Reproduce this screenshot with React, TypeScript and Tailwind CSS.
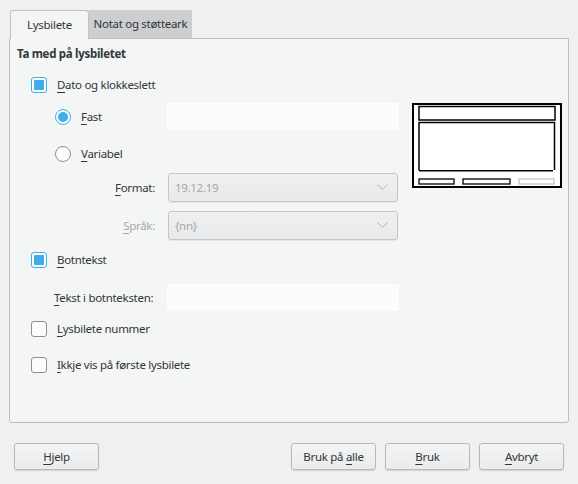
import React from "react";

const font = { fontFamily: '"Noto Sans", "DejaVu Sans", sans-serif' };

const Mn = ({ k, rest }: { k: string; rest: string }) => (
  <span>
    <span className="underline underline-offset-[3px] decoration-1">{k}</span>
    {rest}
  </span>
);

const Check = ({ checked }: { checked?: boolean }) =>
  checked ? (
    <span className="flex items-center justify-center w-4 h-4 rounded-[3px] border border-[#3daee9] bg-[#fcfcfc]">
      <span className="w-[10px] h-[10px] bg-[#3daee9] rounded-[1px]" />
    </span>
  ) : (
    <span className="w-4 h-4 rounded-[3px] border border-[#8d9093] bg-[#fcfcfc]" />
  );

const Radio = ({ checked }: { checked?: boolean }) =>
  checked ? (
    <span className="flex items-center justify-center w-4 h-4 rounded-full border border-[#3daee9] bg-[#fcfcfc]">
      <span className="w-[10px] h-[10px] bg-[#3daee9] rounded-full" />
    </span>
  ) : (
    <span className="w-4 h-4 rounded-full border border-[#8d9093] bg-[#fcfcfc]" />
  );

const Combo = ({ value }: { value: string }) => (
  <div className="flex items-center justify-between w-[230px] h-[29px] rounded-[3px] border border-[#c4c6c8] bg-gradient-to-b from-[#eff0f1] to-[#e8e9ea] shadow-[0_1px_0_rgba(0,0,0,0.06)] pl-[6px] pr-[9px] text-[#a4a7a9]">
    <span>{value}</span>
    <svg width="11" height="7" viewBox="0 0 11 7" fill="none">
      <path d="M0.5 0.5 L5.5 5.5 L10.5 0.5" stroke="#b0b3b5" strokeWidth="1" />
    </svg>
  </div>
);

const Btn = ({ children }: { children: React.ReactNode }) => (
  <button className="w-[85px] h-[27px] rounded-[3px] border border-[#b6b8ba] bg-gradient-to-b from-[#f3f4f4] to-[#eaebec] shadow-[0_1px_1px_rgba(0,0,0,0.12)] text-[#31363b] text-[11.5px] tracking-[-0.3px] leading-none">
    {children}
  </button>
);

const Preview = () => (
  <svg width="150" height="85" viewBox="0 0 150 85" className="block">
    <rect x="1" y="1" width="148" height="83" fill="white" stroke="black" strokeWidth="2" />
    <rect x="7" y="3.5" width="136" height="13.5" fill="white" stroke="black" strokeWidth="1.5" />
    <path d="M7 67.5 V19.5 H142.5 V67" fill="none" stroke="black" strokeWidth="1.5" />
    <line x1="7" y1="67.8" x2="141" y2="67.8" stroke="black" strokeWidth="1.5" />
    <rect x="7" y="76" width="35" height="5" fill="white" stroke="black" strokeWidth="1.3" />
    <rect x="51" y="76" width="47" height="5" fill="white" stroke="black" strokeWidth="1.3" />
    <rect x="107" y="76" width="35" height="5" fill="white" stroke="#c6c6c6" strokeWidth="1.3" />
  </svg>
);

export default function App() {
  return (
    <div style={font} className="w-[578px] h-[484px] bg-[#eff0f1] text-[11.5px] tracking-[-0.3px] text-[#31363b] pt-[10px] overflow-hidden">
      {/* tabs */}
      <div className="flex ml-[10px] h-[28px] relative z-10">
        <div className="w-[79px] h-[29px] flex items-center justify-center border border-b-0 border-[#c0c2c4] rounded-t-[3px] bg-[#f4f5f5]">
          Lysbilete
        </div>
        <div className="w-[103px] h-[28px] flex items-center justify-center whitespace-nowrap bg-[#cdcecf] text-[#31363b]">
          Notat og støtteark
        </div>
      </div>

      {/* panel */}
      <div className="mx-[9px] h-[385px] border border-[#bcbebf] rounded-b-[3px] bg-[#f4f5f5]">
        <div className="pt-[6px] pl-[7px] h-[24px] leading-[18px] font-bold text-[11.5px]">Ta med på lysbiletet</div>

        <div className="flex mt-[12px]">
          <div className="w-[390px]">
            <div className="flex items-center h-[20px] pl-[21px] gap-[10px]">
              <Check checked />
              <Mn k="D" rest="ato og klokkeslett" />
            </div>

            <div className="flex items-center h-[27px] mt-[8px] pl-[45px]">
              <div className="flex items-center gap-[10px] w-[112px]">
                <Radio checked />
                <Mn k="F" rest="ast" />
              </div>
              <div className="w-[232px] h-[27px] bg-[#fcfcfc]" />
            </div>

            <div className="flex items-center h-[20px] mt-[14px] pl-[45px] gap-[10px]">
              <Radio />
              <Mn k="V" rest="ariabel" />
            </div>

            <div className="flex items-center h-[29px] mt-[9px]">
              <div className="w-[146px] text-right pr-[1px]">
                <Mn k="F" rest="ormat:" />
              </div>
              <div className="ml-[12px]">
                <Combo value="19.12.19" />
              </div>
            </div>

            <div className="flex items-center h-[29px] mt-[9px]">
              <div className="w-[146px] text-right pr-[1px] text-[#a4a7a9]">
                <Mn k="S" rest="pråk:" />
              </div>
              <div className="ml-[12px]">
                <Combo value="{nn}" />
              </div>
            </div>
          </div>
          <div className="ml-[12px] mt-[28px]">
            <Preview />
          </div>
        </div>

        <div className="flex items-center h-[20px] mt-[10px] pl-[21px] gap-[10px]">
          <Check checked />
          <Mn k="B" rest="otntekst" />
        </div>

        <div className="flex items-center h-[27px] mt-[14px] pl-[44px]">
          <div className="w-[113px] whitespace-nowrap">
            <Mn k="T" rest="ekst i botnteksten:" />
          </div>
          <div className="w-[232px] h-[27px] bg-[#fcfcfc]" />
        </div>

        <div className="flex items-center h-[20px] mt-[8px] pl-[21px] gap-[10px]">
          <Check />
          <Mn k="L" rest="ysbilete nummer" />
        </div>

        <div className="flex items-center h-[20px] mt-[16px] pl-[21px] gap-[10px]">
          <Check />
          <Mn k="I" rest="kkje vis på første lysbilete" />
        </div>
      </div>

      {/* buttons */}
      <div className="flex items-center mt-[20px] px-[14px]">
        <Btn>
          <Mn k="H" rest="jelp" />
        </Btn>
        <div className="flex-1" />
        <div className="flex gap-[9px]">
          <Btn>
            Bruk på <Mn k="a" rest="lle" />
          </Btn>
          <Btn>
            <Mn k="B" rest="ruk" />
          </Btn>
          <Btn>
            <Mn k="A" rest="vbryt" />
          </Btn>
        </div>
      </div>
    </div>
  );
}
